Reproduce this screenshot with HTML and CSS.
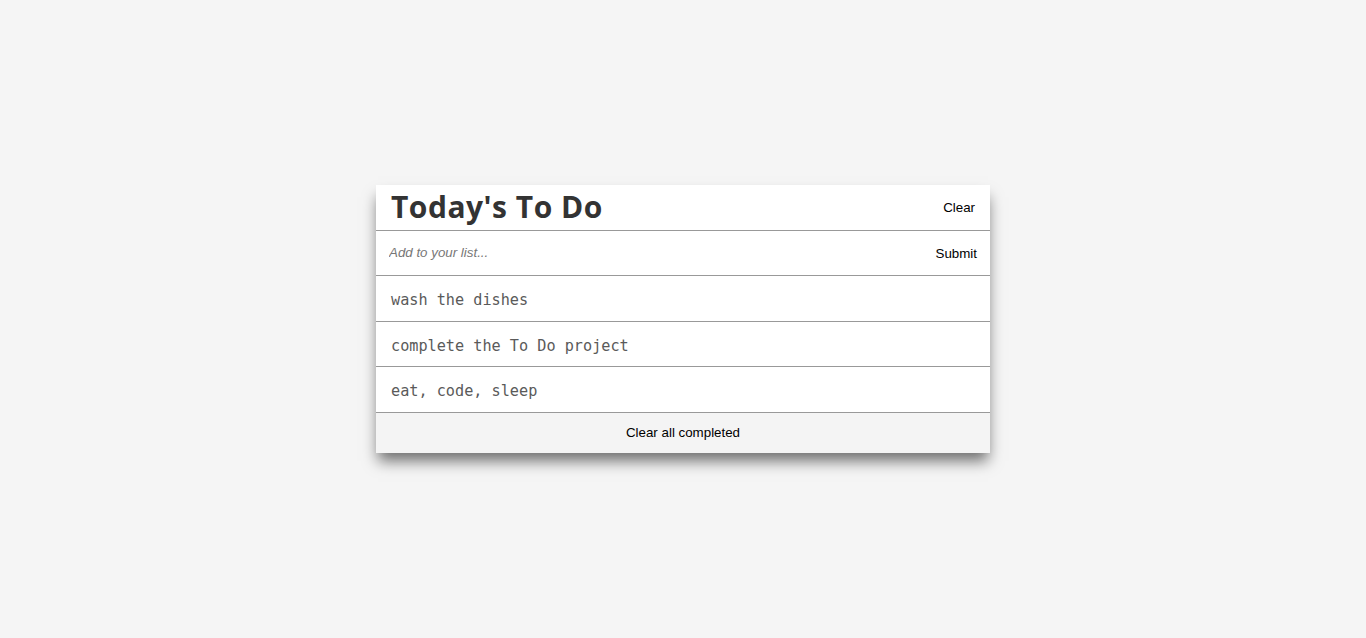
FILE: index.html
```html
<!DOCTYPE html>
<html>
<head>
<meta charset="utf-8">
<title>Today's To Do</title>
<link rel="stylesheet" href="styles.css">
</head>
<body>
<div class="card">
  <div class="header">
    <h1 class="title">Today's To Do</h1>
    <button class="btn">Clear</button>
  </div>
  <form class="add-row">
    <input class="add-input" type="text" placeholder="Add to your list...">
    <button class="btn" type="button">Submit</button>
  </form>
  <ul class="list">
    <li class="item">wash the dishes</li>
    <li class="item">complete the To Do project</li>
    <li class="item">eat, code, sleep</li>
  </ul>
  <button class="footer">Clear all completed</button>
</div>
</body>
</html>
```

FILE: styles.css
```css
html, body {
  margin: 0;
  padding: 0;
}
body {
  background: #f5f5f5;
  height: 100vh;
  display: flex;
  align-items: center;
  justify-content: center;
  font-family: "Liberation Sans", Arial, sans-serif;
}
.card {
  width: 614px;
  background: #fff;
  box-shadow: 0 10px 14px -2px rgba(0, 0, 0, 0.55);
  display: flex;
  flex-direction: column;
}
.header {
  height: 45px;
  display: flex;
  align-items: center;
  justify-content: space-between;
  padding: 0 15px;
  border-bottom: 1px solid #999;
}
.title {
  margin: 0;
  font-family: "Open Sans", sans-serif;
  font-weight: 700;
  font-size: 30px;
  color: #333;
  letter-spacing: 0.5px;
  position: relative;
  top: -1px;
}
.btn {
  border: none;
  background: none;
  font-family: "Liberation Sans", Arial, sans-serif;
  font-size: 13.333px;
  color: #000;
  padding: 0;
}
.add-row {
  margin: 0;
  height: 44px;
  box-sizing: border-box;
  display: flex;
  align-items: center;
  justify-content: space-between;
  padding: 0 13px;
  border-bottom: 1px solid #999;
  box-sizing: content-box;
}
.add-input {
  border: none;
  outline: none;
  font-family: "Liberation Sans", Arial, sans-serif;
  font-size: 13.333px;
  font-style: italic;
  padding: 0 0 2px;
  flex: 1;
}
.add-input::placeholder {
  color: #777;
}
.list {
  list-style: none;
  margin: 0;
  padding: 0;
}
.item {
  height: 45.67px;
  box-sizing: border-box;
  display: flex;
  align-items: center;
  padding: 3px 15px 0;
  border-bottom: 1px solid #999;
  font-family: "DejaVu Sans Mono", monospace;
  font-size: 15.2px;
  color: #5a5a5a;
}
.footer {
  height: 40px;
  border: none;
  background: #f4f4f4;
  font-family: "Liberation Sans", Arial, sans-serif;
  font-size: 13.333px;
  color: #000;
  padding: 0;
}
```
